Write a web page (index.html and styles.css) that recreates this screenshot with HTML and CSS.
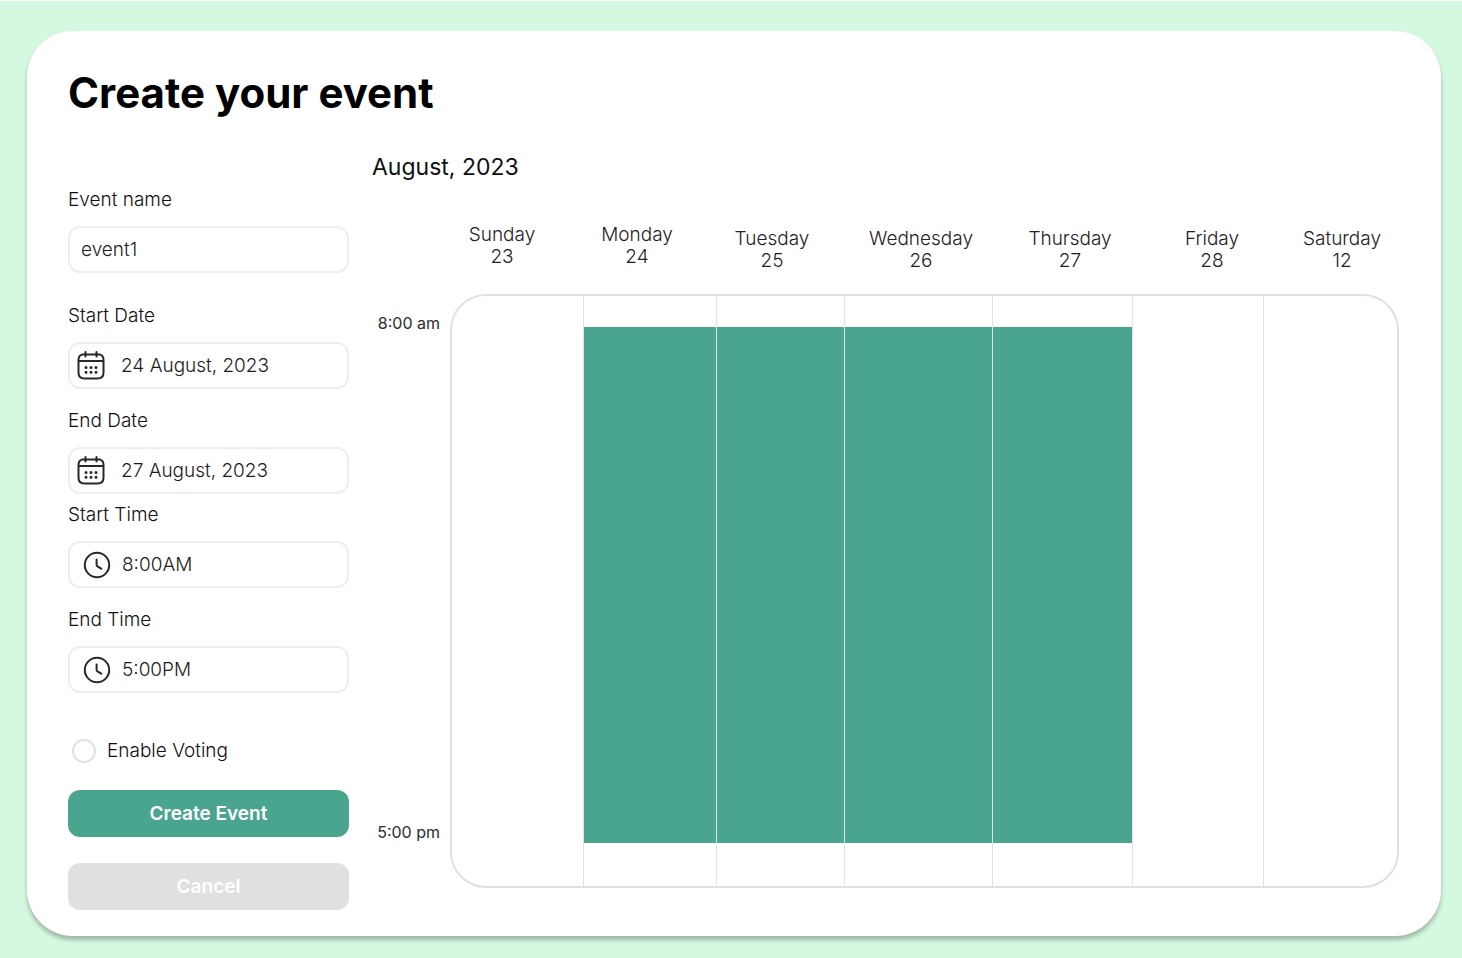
FILE: index.html
```html
<!DOCTYPE html>
<html lang="en">
<head>
<meta charset="utf-8">
<meta name="viewport" content="width=device-width, initial-scale=1">
<title>Create your event</title>
<link rel="stylesheet" href="styles.css">
</head>
<body>
<svg class="sprite" aria-hidden="true">
  <symbol id="icon-calendar" viewBox="0 1 28 30">
    <path d="M9 4.500H19M5 4.600C2.500 5.200 1.500 7 1.500 10V22.500C1.500 26.500 3.500 28.500 7.500 28.500H20.500C24.500 28.500 26.500 26.500 26.500 22.500V10C26.500 7 25.500 5.200 23 4.600M1.500 11H26.500M8.500 2V6.500M19.500 2V6.500M5 4.600H9M19 4.600H23"/>
    <path class="dots" d="M9 17.500h.01M14 17.500h.01M19 17.500h.01M9 22.200h.01M14 22.200h.01M19 22.200h.01"/>
  </symbol>
  <symbol id="icon-clock" viewBox="0 0 28 28">
    <circle cx="14" cy="14" r="12.200"/>
    <path d="M13.600 8.500V13.800Q13.600 14.800 14.500 15.400L18.200 17.700"/>
  </symbol>
</svg>
<main class="card">
  <h1 class="title">Create your event</h1>
  <div class="layout">
    <form class="form">
      <div class="field field-loose">
        <label for="name">Event name</label>
        <div class="box"><input id="name" type="text" value="event1"></div>
      </div>
      <div class="field">
        <label for="start-date">Start Date</label>
        <div class="box box-date"><svg class="icon icon-date"><use href="#icon-calendar"/></svg><input id="start-date" type="text" value="24 August, 2023"></div>
      </div>
      <div class="field field-tight">
        <label for="end-date">End Date</label>
        <div class="box box-date"><svg class="icon icon-date"><use href="#icon-calendar"/></svg><input id="end-date" type="text" value="27 August, 2023"></div>
      </div>
      <div class="field">
        <label for="start-time">Start Time</label>
        <div class="box box-time"><svg class="icon icon-time"><use href="#icon-clock"/></svg><input id="start-time" type="text" value="8:00AM"></div>
      </div>
      <div class="field">
        <label for="end-time">End Time</label>
        <div class="box box-time"><svg class="icon icon-time"><use href="#icon-clock"/></svg><input id="end-time" type="text" value="5:00PM"></div>
      </div>
      <div class="voting">
        <input id="voting" type="radio" name="voting">
        <label for="voting">Enable Voting</label>
      </div>
      <button class="button button-primary" type="submit">Create Event</button>
      <button class="button button-muted" type="button">Cancel</button>
    </form>
    <section class="calendar">
      <h2 class="month">August, 2023</h2>
      <div class="days">
        <div class="day day-top">Sunday<br>23</div>
        <div class="day day-top">Monday<br>24</div>
        <div class="day">Tuesday<br>25</div>
        <div class="day">Wednesday<br>26</div>
        <div class="day">Thursday<br>27</div>
        <div class="day">Friday<br>28</div>
        <div class="day">Saturday<br>12</div>
      </div>
      <div class="schedule">
        <div class="times"><span>8:00 am</span><span>5:00 pm</span></div>
        <div class="week">
          <div class="column"></div>
          <div class="column"><div class="slot"></div></div>
          <div class="column"><div class="slot"></div></div>
          <div class="column"><div class="slot"></div></div>
          <div class="column"><div class="slot"></div></div>
          <div class="column"></div>
          <div class="column"></div>
        </div>
      </div>
    </section>
  </div>
</main>
</body>
</html>
```
FILE: styles.css
```css
* { box-sizing: border-box; }

body {
  margin: 0;
  min-height: 100vh;
  display: flex;
  padding: 30px 21px 22px 27px;
  border-top: 1px solid #fff;
  background: #d5f8e0;
  color: #101012;
  font-family: Inter, "Liberation Sans", sans-serif;
  font-size: 19px;
  font-weight: 300;
  line-height: 24px;
}

.sprite { position: absolute; width: 0; height: 0; }

.card {
  flex: 1;
  display: flex;
  flex-direction: column;
  padding: 37px 42px 25px 41px;
  background: #fff;
  border-radius: 46px;
  box-shadow: 0 4px 4px rgba(0, 0, 0, 0.25);
}

.title {
  margin: 0 0 33px;
  color: #000;
  font-size: 42px;
  font-weight: 700;
  line-height: 50px;
}

.layout {
  flex: 1;
  display: grid;
  grid-template-columns: 281px 1fr;
  gap: 23px;
}

.form {
  display: flex;
  flex-direction: column;
  padding-top: 37px;
}

.field {
  display: flex;
  flex-direction: column;
  gap: 14px;
  margin-bottom: 20px;
}
.field-loose { margin-bottom: 31px; }
.field-tight { margin-bottom: 9px; }

.box {
  display: flex;
  align-items: center;
  height: 47px;
  padding: 0 11px;
  border: 2px solid #eee;
  border-radius: 12px;
}
.box-date { padding-left: 7px; gap: 16px; }
.box-time { padding-left: 13px; gap: 11px; }

.box input {
  flex: 1;
  min-width: 0;
  padding: 0;
  border: 0;
  outline: 0;
  background: none;
  color: #1c1c1e;
  font: inherit;
}

.icon {
  flex: none;
  fill: none;
  stroke: #25282d;
  stroke-width: 2;
  stroke-linecap: round;
  stroke-linejoin: round;
}
.icon-date { width: 28px; height: 30px; }
.icon-time { width: 28px; height: 28px; }
.dots { stroke-width: 3; }

.voting {
  display: flex;
  align-items: center;
  gap: 11px;
  margin: 26px 0 27px;
  padding-left: 4px;
}
.voting input {
  appearance: none;
  width: 24px;
  height: 24px;
  margin: 0;
  border: 2px solid #e2e2e2;
  border-radius: 50%;
}
.voting input:checked { background: #4aa58f; }

.button {
  height: 47px;
  border: 0;
  border-radius: 12px;
  color: #fff;
  font: inherit;
  font-weight: 600;
}
.button-primary { margin-bottom: 26px; background: #4aa58f; }
.button-muted { background: #e0e0e0; }

.calendar {
  display: flex;
  flex-direction: column;
  padding-bottom: 23px;
}

.month {
  margin: 0 0 41px;
  font-size: 23px;
  font-weight: 400;
  line-height: 32px;
}

.days {
  display: grid;
  grid-template-columns: 132fr 138fr 132fr 166fr 132fr 152fr 108fr;
  height: 48px;
  margin: 0 3px 22px 64px;
  color: #1f2126;
  line-height: 22px;
  text-align: center;
}
.day { align-self: end; }
.day-top { align-self: start; }

.schedule { flex: 1; display: flex; }

.times {
  display: flex;
  flex-direction: column;
  justify-content: space-between;
  width: 78px;
  padding: 19px 10px 46px 0;
  color: #2c2c2e;
  font-size: 16px;
  font-weight: 400;
  line-height: 20px;
  text-align: right;
}

.week {
  flex: 1;
  display: grid;
  grid-template-columns: 131fr 133fr 128fr 148fr 140fr 131fr 134fr;
  border: 2px solid #e0e0e0;
  border-radius: 36px;
}
.column {
  display: flex;
  padding: 31px 0 43px;
}
.column + .column { border-left: 1px solid #e2e2e2; }
.slot { flex: 1; background: #4aa58f; }
```
